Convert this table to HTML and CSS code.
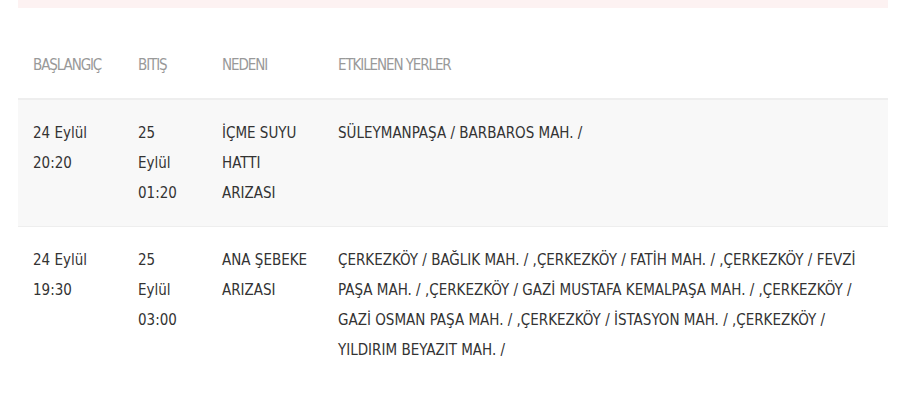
FILE: index.html
```html
<!DOCTYPE html>
<html lang="tr">
<head>
<meta charset="utf-8">
<link rel="stylesheet" href="styles.css">
</head>
<body>
<div class="page">
  <div class="notice"></div>
  <table class="outages">
    <thead>
      <tr>
        <th class="c-start">BAŞLANGIÇ</th>
        <th class="c-end">BITIŞ</th>
        <th class="c-reason">NEDENI</th>
        <th class="c-places">ETKILENEN YERLER</th>
      </tr>
    </thead>
    <tbody>
      <tr class="odd">
        <td>24 Eylül 20:20</td>
        <td>25 Eylül 01:20</td>
        <td>İÇME SUYU HATTI ARIZASI</td>
        <td>SÜLEYMANPAŞA / BARBAROS MAH. /</td>
      </tr>
      <tr>
        <td>24 Eylül 19:30</td>
        <td>25 Eylül 03:00</td>
        <td>ANA ŞEBEKE ARIZASI</td>
        <td>ÇERKEZKÖY / BAĞLIK MAH. / ,ÇERKEZKÖY / FATİH MAH. / ,ÇERKEZKÖY / FEVZİ PAŞA MAH. / ,ÇERKEZKÖY / GAZİ MUSTAFA KEMALPAŞA MAH. / ,ÇERKEZKÖY / GAZİ OSMAN PAŞA MAH. / ,ÇERKEZKÖY / İSTASYON MAH. / ,ÇERKEZKÖY / YILDIRIM BEYAZIT MAH. /</td>
      </tr>
    </tbody>
  </table>
</div>
</body>
</html>
```

FILE: styles.css
```css
html, body {
  margin: 0;
  padding: 0;
  background: #fff;
}
body {
  font-family: "DejaVu Sans Condensed", "Liberation Sans", sans-serif;
  color: #333;
}
.page {
  padding: 0 12px 0 18px;
}
.notice {
  height: 8px;
  background: #fdf2f2;
}
.outages {
  width: 100%;
  border-collapse: collapse;
  margin-top: 37px;
}
.outages th {
  text-align: left;
  font-weight: normal;
  font-size: 15px;
  letter-spacing: -1.1px;
  line-height: 20px;
  color: #999;
  padding: 10px 15px 23px;
  border-bottom: 2px solid #eee;
}
.c-start { width: 75px; }
.c-end { width: 54px; }
.c-reason { width: 86px; }
.outages td {
  vertical-align: top;
  font-size: 15px;
  line-height: 30px;
  padding: 18px 15px;
  border-bottom: 1px solid #eee;
}
.outages tr.odd td {
  background: #f8f8f8;
}
.outages tbody tr:last-child td {
  border-bottom: none;
}
```
